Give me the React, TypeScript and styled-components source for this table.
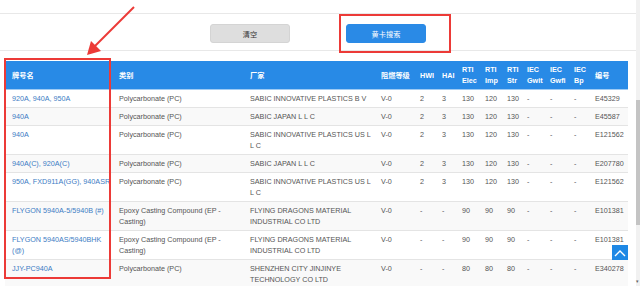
import React from 'react';
import styled, { createGlobalStyle } from 'styled-components';

const GlobalStyle = createGlobalStyle`
  html, body {
    margin: 0;
    padding: 0;
    background: #fff;
    overflow: hidden;
  }
  body {
    font-family: 'Liberation Sans', 'Noto Sans CJK SC', sans-serif;
    font-size: 7.2px;
    color: #555;
  }
`;

interface IRow {
  name: string;
  type: string;
  maker: string;
  flame: string;
  hwi: string;
  hai: string;
  elec: string;
  imp: string;
  str: string;
  gwit: string;
  gwfi: string;
  bp: string;
  no: string;
}

const PC = 'Polycarbonate (PC)';
const EP = 'Epoxy Casting Compound (EP - Casting)';

const pcValues = { flame: 'V-0', hwi: '2', hai: '3', elec: '130', imp: '120', str: '130', gwit: '-', gwfi: '-', bp: '-' };
const epValues = { flame: 'V-0', hwi: '-', hai: '-', elec: '90', imp: '90', str: '90', gwit: '-', gwfi: '-', bp: '-' };

const rows: IRow[] = [
  { name: '920A, 940A, 950A', type: PC, maker: 'SABIC INNOVATIVE PLASTICS B V', ...pcValues, no: 'E45329' },
  { name: '940A', type: PC, maker: 'SABIC JAPAN L L C', ...pcValues, no: 'E45587' },
  { name: '940A', type: PC, maker: 'SABIC INNOVATIVE PLASTICS US L L C', ...pcValues, no: 'E121562' },
  { name: '940A(C), 920A(C)', type: PC, maker: 'SABIC JAPAN L L C', ...pcValues, no: 'E207780' },
  { name: '950A, FXD911A(GG), 940ASR', type: PC, maker: 'SABIC INNOVATIVE PLASTICS US L L C', ...pcValues, no: 'E121562' },
  { name: 'FLYGON 5940A-5/5940B (#)', type: EP, maker: 'FLYING DRAGONS MATERIAL INDUSTRIAL CO LTD', ...epValues, no: 'E101381' },
  { name: 'FLYGON 5940AS/5940BHK (@)', type: EP, maker: 'FLYING DRAGONS MATERIAL INDUSTRIAL CO LTD', ...epValues, no: 'E101381' },
  {
    name: 'JJY-PC940A',
    type: PC,
    maker: 'SHENZHEN CITY JINJINYE TECHNOLOGY CO LTD',
    flame: 'V-0',
    hwi: '-',
    hai: '-',
    elec: '80',
    imp: '80',
    str: '80',
    gwit: '-',
    gwfi: '-',
    bp: '-',
    no: 'E340278',
  },
];

const columns: { label: string[]; width: number }[] = [
  { label: ['牌号名'], width: 107 },
  { label: ['类别'], width: 131 },
  { label: ['厂家'], width: 131 },
  { label: ['阻燃等级'], width: 39 },
  { label: ['HWI'], width: 22 },
  { label: ['HAI'], width: 20 },
  { label: ['RTI', 'Elec'], width: 23 },
  { label: ['RTI', 'Imp'], width: 22 },
  { label: ['RTI', 'Str'], width: 20 },
  { label: ['IEC', 'Gwit'], width: 23 },
  { label: ['IEC', 'Gwfi'], width: 24 },
  { label: ['IEC', 'Bp'], width: 21 },
  { label: ['编号'], width: 40 },
];

const App = () => {
  return (
    <>
      <GlobalStyle />
      <Page>
        <Main>
          <TopBar />
          <Toolbar>
            <Button variant="plain">清空</Button>
            <Button variant="primary">黄卡搜索</Button>
          </Toolbar>
          <TableWrap>
            <Table>
              <colgroup>
                {columns.map((c, i) => (
                  <col key={i} style={{ width: c.width }} />
                ))}
              </colgroup>
              <thead>
                <tr>
                  {columns.map((c, i) => (
                    <Th key={i}>
                      {c.label.map((l, j) => (
                        <React.Fragment key={j}>
                          {j > 0 && <br />}
                          {l}
                        </React.Fragment>
                      ))}
                    </Th>
                  ))}
                </tr>
              </thead>
              <tbody>
                {rows.map((r, i) => (
                  <Tr key={i} striped={i % 2 === 1}>
                    <NameCell>
                      <NameLink>{r.name}</NameLink>
                    </NameCell>
                    <Td>{r.type}</Td>
                    <Td>{r.maker}</Td>
                    <Td>{r.flame}</Td>
                    <Td>{r.hwi}</Td>
                    <Td>{r.hai}</Td>
                    <Td>{r.elec}</Td>
                    <Td>{r.imp}</Td>
                    <Td>{r.str}</Td>
                    <Td>{r.gwit}</Td>
                    <Td>{r.gwfi}</Td>
                    <Td>{r.bp}</Td>
                    <Td>{r.no}</Td>
                  </Tr>
                ))}
              </tbody>
            </Table>
          </TableWrap>
        </Main>
        <ScrollTrack>
          <ScrollThumb />
          <ScrollArrow>▾</ScrollArrow>
        </ScrollTrack>

        <BackTop>
          <svg width="12" height="8" viewBox="0 0 12 8">
            <path d="M1 7 L6 2 L11 7" fill="none" stroke="#fff" strokeWidth="1.4" />
          </svg>
        </BackTop>

        <MarkBox left={4} top={58} width={107} height={221} />
        <MarkBox left={339} top={14} width={112} height={39} />
        <Arrow width="640" height="286" viewBox="0 0 640 286">
          <line x1="134" y1="7" x2="95" y2="46" stroke="#ec3a37" strokeWidth="2" />
          <polygon points="87,55 91,41 101,51" fill="#ec3a37" />
        </Arrow>
      </Page>
    </>
  );
};

export default App;

const Page = styled.div`
  position: relative;
  display: flex;
  width: 640px;
  height: 286px;
  overflow: hidden;
`;

const Main = styled.div`
  flex: 1;
  min-width: 0;
`;

const TopBar = styled.div`
  height: 13px;
  border-bottom: 1px solid #e8e8e8;
`;

const Toolbar = styled.div`
  display: flex;
  justify-content: center;
  align-items: flex-start;
  gap: 56px;
  padding: 10px 0 7px;
  border-bottom: 1px solid #e8e8e8;
`;

const Button = styled.button<{ variant: 'plain' | 'primary' }>`
  width: 80px;
  height: 19px;
  padding: 0;
  border-radius: 3px;
  font-family: inherit;
  font-size: 7.2px;
  cursor: pointer;
  border: 1px solid ${({ variant }) => (variant === 'primary' ? '#2a8ae6' : '#d4d4d4')};
  background: ${({ variant }) => (variant === 'primary' ? '#2a8ae6' : '#dedede')};
  color: ${({ variant }) => (variant === 'primary' ? '#fff' : '#333')};
`;

const TableWrap = styled.div`
  padding: 10px 8px 0 5px;
`;

const Table = styled.table`
  width: 100%;
  table-layout: fixed;
  border-collapse: collapse;
`;

const Th = styled.th`
  background: #288ae6;
  color: #fff;
  font-weight: bold;
  text-align: left;
  vertical-align: middle;
  line-height: 11px;
  padding: 3px 1px 3px 7px;
  white-space: nowrap;
  border-bottom: 1px solid #9fcbf4;
`;

const Tr = styled.tr<{ striped: boolean }>`
  background: ${({ striped }) => (striped ? '#f9f9f9' : '#fff')};
`;

const Td = styled.td`
  text-align: left;
  vertical-align: top;
  line-height: 11px;
  padding: 3px 2px 3px 7px;
  border-bottom: 1px solid #e4e4e4;
  color: #555;
`;

const NameCell = styled(Td)`
  padding-right: 0;
`;

const NameLink = styled.a`
  color: #3c7cc4;
  text-decoration: none;
`;

const ScrollTrack = styled.div`
  position: relative;
  width: 4px;
  background: #f1f1f1;
`;

const ScrollThumb = styled.div`
  margin-top: 100px;
  height: 125px;
  background: #c4c4c4;
`;

const ScrollArrow = styled.div`
  position: absolute;
  bottom: 2px;
  left: 0;
  font-size: 5px;
  color: #666;
`;

const BackTop = styled.div`
  position: absolute;
  left: 612px;
  top: 245px;
  width: 16px;
  height: 15px;
  background: #1e88e5;
  display: flex;
  align-items: center;
  justify-content: center;
`;

const MarkBox = styled.div<{ left: number; top: number; width: number; height: number }>`
  position: absolute;
  left: ${({ left }) => left}px;
  top: ${({ top }) => top}px;
  width: ${({ width }) => width}px;
  height: ${({ height }) => height}px;
  box-sizing: border-box;
  border: 2px solid #ec3a37;
  pointer-events: none;
`;

const Arrow = styled.svg`
  position: absolute;
  left: 0;
  top: 0;
  pointer-events: none;
`;
